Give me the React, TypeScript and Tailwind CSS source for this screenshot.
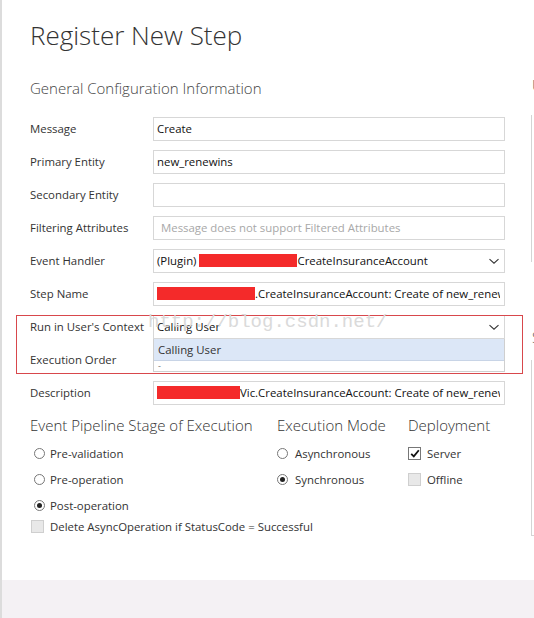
import React from "react"

const font = { fontFamily: '"Segoe UI", "Open Sans", "Noto Sans", sans-serif' }

function Chevron() {
  return (
    <svg width="12" height="8" viewBox="0 0 12 8" fill="none" stroke="#333" strokeWidth="1.1">
      <path d="M1.5 2.2 6 6.2 10.5 2.2" />
    </svg>
  )
}

function Redact({ w }: { w: number }) {
  return <span className="inline-block shrink-0 h-[13px] bg-[#f42a2a]" style={{ width: w }} />
}

function Row({ label, children }: { label: string; children?: React.ReactNode }) {
  return (
    <div className="flex items-center h-[33px]">
      <div className="w-[123px] text-[11.4px] text-[#333] whitespace-nowrap">{label}</div>
      {children}
    </div>
  )
}

function Field({ children, select, muted }: { children?: React.ReactNode; select?: boolean; muted?: boolean }) {
  return (
    <div
      className={
        "w-[352px] h-[24px] border border-[#d7d7d7] bg-white flex items-center pr-[4px] text-[11.4px] whitespace-nowrap overflow-hidden " +
        (muted ? "text-[#a8a8a8] pl-[7px]" : "text-[#111] pl-[3px]")
      }
    >
      <div className="flex-1 overflow-hidden flex items-center">{children}</div>
      {select && <Chevron />}
    </div>
  )
}

function Radio({ checked, label, inset }: { checked?: boolean; label: string; inset?: boolean }) {
  return (
    <div
      className={
        "flex items-center h-[26px] text-[11.4px] text-[#333] whitespace-nowrap " + (inset ? "gap-[5px]" : "gap-[7px]")
      }
    >
      <span
        className={
          "shrink-0 w-[11px] h-[11px] rounded-full border border-[#777] flex items-center justify-center " +
          (inset ? "ml-[4px]" : "")
        }
      >
        {checked && <span className="w-[5px] h-[5px] rounded-full bg-[#222]" />}
      </span>
      {label}
    </div>
  )
}

function Check({ checked, label, inset }: { checked?: boolean; label: string; inset?: boolean }) {
  return (
    <div className="flex items-center h-[26px] gap-[6px] text-[11.4px] text-[#333] whitespace-nowrap">
      <span
        className={
          "shrink-0 w-[13px] h-[13px] border flex items-center justify-center " +
          (checked ? "border-[#777] bg-white" : "border-[#cfcfcf] bg-[#e8e8e8]") +
          (inset ? " ml-[1px]" : "")
        }
      >
        {checked && (
          <svg width="10" height="9" viewBox="0 0 10 9" fill="none" stroke="#111" strokeWidth="1.8">
            <path d="M1.2 4.8 3.8 7.4 8.8 1.2" />
          </svg>
        )}
      </span>
      {label}
    </div>
  )
}

export default function App() {
  return (
    <div className="w-[534px] h-[618px] overflow-hidden bg-white flex flex-col" style={font}>
      <div className="flex-1 flex border-l-2 border-[#dcdcdc] overflow-hidden">
        <div className="w-[529px] shrink-0 pl-[28px] relative">
          <h1 className="text-[26px] font-light text-[#333] leading-none pt-[22px]">Register New Step</h1>
          <h2 className="text-[15px] font-light text-[#444] mt-[29px]">General Configuration Information</h2>

          <div className="mt-[13px]">
            <Row label="Message">
              <Field>Create</Field>
            </Row>
            <Row label="Primary Entity">
              <Field>new_renewins</Field>
            </Row>
            <Row label="Secondary Entity">
              <Field />
            </Row>
            <Row label="Filtering Attributes">
              <Field muted>Message does not support Filtered Attributes</Field>
            </Row>
            <Row label="Event Handler">
              <Field select>
                <span className="mr-[3px]">(Plugin)</span>
                <Redact w={98} />
                <span>CreateInsuranceAccount</span>
              </Field>
            </Row>
            <Row label="Step Name">
              <Field>
                <Redact w={98} />
                <span>.CreateInsuranceAccount: Create of new_renewinsurance</span>
              </Field>
            </Row>
            <Row label="Run in User's Context">
              <div className="relative">
                <Field select>Calling User</Field>
                <div className="absolute left-0 top-[24px] w-[352px] h-[33px] border border-[#cfcfcf] border-t-0 bg-white z-10">
                  <div className="h-[22px] bg-[#dce7f7] border-b border-[#c8d4e6] flex items-center pl-[4px] text-[11.4px] text-[#333]">
                    Calling User
                  </div>
                  <div className="pl-[4px] text-[9px] leading-none text-[#777]">-</div>
                </div>
              </div>
            </Row>
            <Row label="Execution Order">
              <Field />
            </Row>
            <Row label="Description">
              <Field>
                <Redact w={83} />
                <span>Vic.CreateInsuranceAccount: Create of new_renewinsurance</span>
              </Field>
            </Row>
          </div>

          <div className="flex mt-[4px]">
            <div className="w-[247px]">
              <div className="text-[15px] font-light text-[#333] h-[24px] mb-[3px] whitespace-nowrap">
                Event Pipeline Stage of Execution
              </div>
              <Radio inset label="Pre-validation" />
              <Radio inset label="Pre-operation" />
              <Radio inset checked label="Post-operation" />
              <div className="-mt-[5px]">
                <Check inset label="Delete AsyncOperation if StatusCode = Successful" />
              </div>
            </div>
            <div className="w-[131px]">
              <div className="text-[15px] font-light text-[#333] h-[24px] mb-[3px] whitespace-nowrap">Execution Mode</div>
              <Radio label="Asynchronous" />
              <Radio checked label="Synchronous" />
            </div>
            <div>
              <div className="text-[15px] font-light text-[#333] h-[24px] mb-[3px] whitespace-nowrap">Deployment</div>
              <Check checked label="Server" />
              <Check label="Offline" />
            </div>
          </div>

          {/* annotation box */}
          <div className="absolute left-[14px] top-[315px] w-[507px] h-[59px] border border-[#d8484c] pointer-events-none z-20" />
          <div
            className="absolute left-[146px] top-[308px] text-[19px] text-[#dadada] pointer-events-none z-20 whitespace-nowrap"
            style={{ fontFamily: '"Liberation Mono", monospace' }}
          >
            http://blog.csdn.net/
          </div>
        </div>

        <div className="flex-1 overflow-hidden">
          <div className="text-[15px] font-light text-[#555] mt-[74px] h-[22px] ml-[1px]">U</div>
          <div className="mt-[19px] h-[147px] border-l border-[#d4d4d4]" />
          <div className="text-[15px] font-light text-[#555] mt-[64px] h-[22px] ml-[1px]">S</div>
          <div className="mt-[12px] h-[176px] border-l border-b border-[#d4d4d4]" />
        </div>
      </div>
      <div className="h-[38px] bg-[#f4f1f4] border-l-2 border-[#dcdcdc]" />
    </div>
  )
}
